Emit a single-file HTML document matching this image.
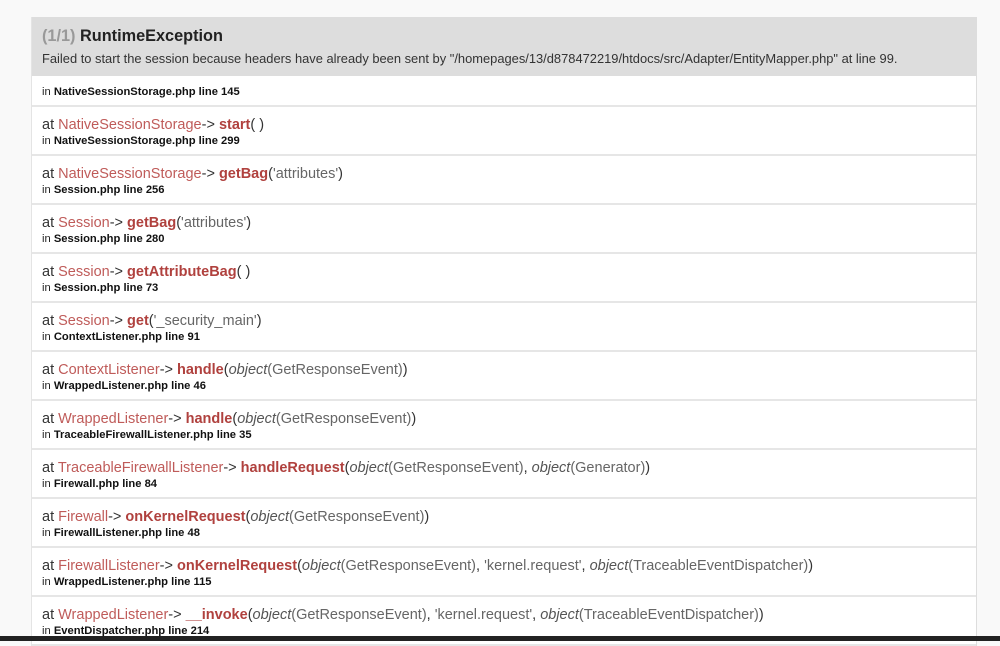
<!DOCTYPE html>
<html><head><meta charset="utf-8"><style>
html,body{margin:0;padding:0;background:#f9f9f9;width:1000px;height:641px;overflow:hidden;font-family:"Liberation Sans",Arial,sans-serif;color:#222}
.box{position:absolute;left:31px;top:17px;width:944px;border-right:1px solid #ddd;border-left:1px solid #e4e4e4}
.hd{background:#ddd;height:59px;padding:0 10px;box-sizing:border-box}
.hd h1{margin:0;padding-top:9px;font-size:16.3px;line-height:20px;font-weight:bold;color:#222}
.hd h1 span{color:#999}
.hd p{margin:5px 0 0;font-size:12.9px;color:#333}
.row{background:#fff;border-bottom:2px solid #e6e6e6;padding:0 10px;box-sizing:border-box;height:49px}
.r0{height:31px;padding-top:10px}
.at{font-size:14.5px;line-height:16px;padding-top:10px;color:#333}
.c{color:#b94a48;opacity:.9}
.m{color:#b0413e;font-weight:bold}
.a{color:#666}
i{color:#555}
.in{font-size:11.2px;line-height:13px;margin-top:2px}
.in b{font-weight:bold;color:#111}
.bar{position:absolute;left:0;top:636px;width:1000px;height:5px;background:#222}
</style></head><body>
<div class="box">
<div class="hd"><h1><span>(1/1)</span> RuntimeException</h1>
<p>Failed to start the session because headers have already been sent by "/homepages/13/d878472219/htdocs/src/Adapter/EntityMapper.php" at line 99.</p></div>
<div class="row r0"><div class="in" style="margin:0">in <b>NativeSessionStorage.php line 145</b></div></div>
<div class="row"><div class="at">at <span class="c">NativeSessionStorage</span>-&gt; <span class="m">start</span>( )</div><div class="in">in <b>NativeSessionStorage.php line 299</b></div></div>
<div class="row"><div class="at">at <span class="c">NativeSessionStorage</span>-&gt; <span class="m">getBag</span>(<span class="a">'attributes'</span>)</div><div class="in">in <b>Session.php line 256</b></div></div>
<div class="row"><div class="at">at <span class="c">Session</span>-&gt; <span class="m">getBag</span>(<span class="a">'attributes'</span>)</div><div class="in">in <b>Session.php line 280</b></div></div>
<div class="row"><div class="at">at <span class="c">Session</span>-&gt; <span class="m">getAttributeBag</span>( )</div><div class="in">in <b>Session.php line 73</b></div></div>
<div class="row"><div class="at">at <span class="c">Session</span>-&gt; <span class="m">get</span>(<span class="a">'_security_main'</span>)</div><div class="in">in <b>ContextListener.php line 91</b></div></div>
<div class="row"><div class="at">at <span class="c">ContextListener</span>-&gt; <span class="m">handle</span>(<i>object</i><span class="a">(GetResponseEvent)</span>)</div><div class="in">in <b>WrappedListener.php line 46</b></div></div>
<div class="row"><div class="at">at <span class="c">WrappedListener</span>-&gt; <span class="m">handle</span>(<i>object</i><span class="a">(GetResponseEvent)</span>)</div><div class="in">in <b>TraceableFirewallListener.php line 35</b></div></div>
<div class="row"><div class="at">at <span class="c">TraceableFirewallListener</span>-&gt; <span class="m">handleRequest</span>(<i>object</i><span class="a">(GetResponseEvent)</span>, <i>object</i><span class="a">(Generator)</span>)</div><div class="in">in <b>Firewall.php line 84</b></div></div>
<div class="row"><div class="at">at <span class="c">Firewall</span>-&gt; <span class="m">onKernelRequest</span>(<i>object</i><span class="a">(GetResponseEvent)</span>)</div><div class="in">in <b>FirewallListener.php line 48</b></div></div>
<div class="row"><div class="at">at <span class="c">FirewallListener</span>-&gt; <span class="m">onKernelRequest</span>(<i>object</i><span class="a">(GetResponseEvent)</span>, <span class="a">'kernel.request'</span>, <i>object</i><span class="a">(TraceableEventDispatcher)</span>)</div><div class="in">in <b>WrappedListener.php line 115</b></div></div>
<div class="row"><div class="at">at <span class="c">WrappedListener</span>-&gt; <span class="m">__invoke</span>(<i>object</i><span class="a">(GetResponseEvent)</span>, <span class="a">'kernel.request'</span>, <i>object</i><span class="a">(TraceableEventDispatcher)</span>)</div><div class="in">in <b>EventDispatcher.php line 214</b></div></div>
</div>
<div class="bar"></div>
</body></html>
